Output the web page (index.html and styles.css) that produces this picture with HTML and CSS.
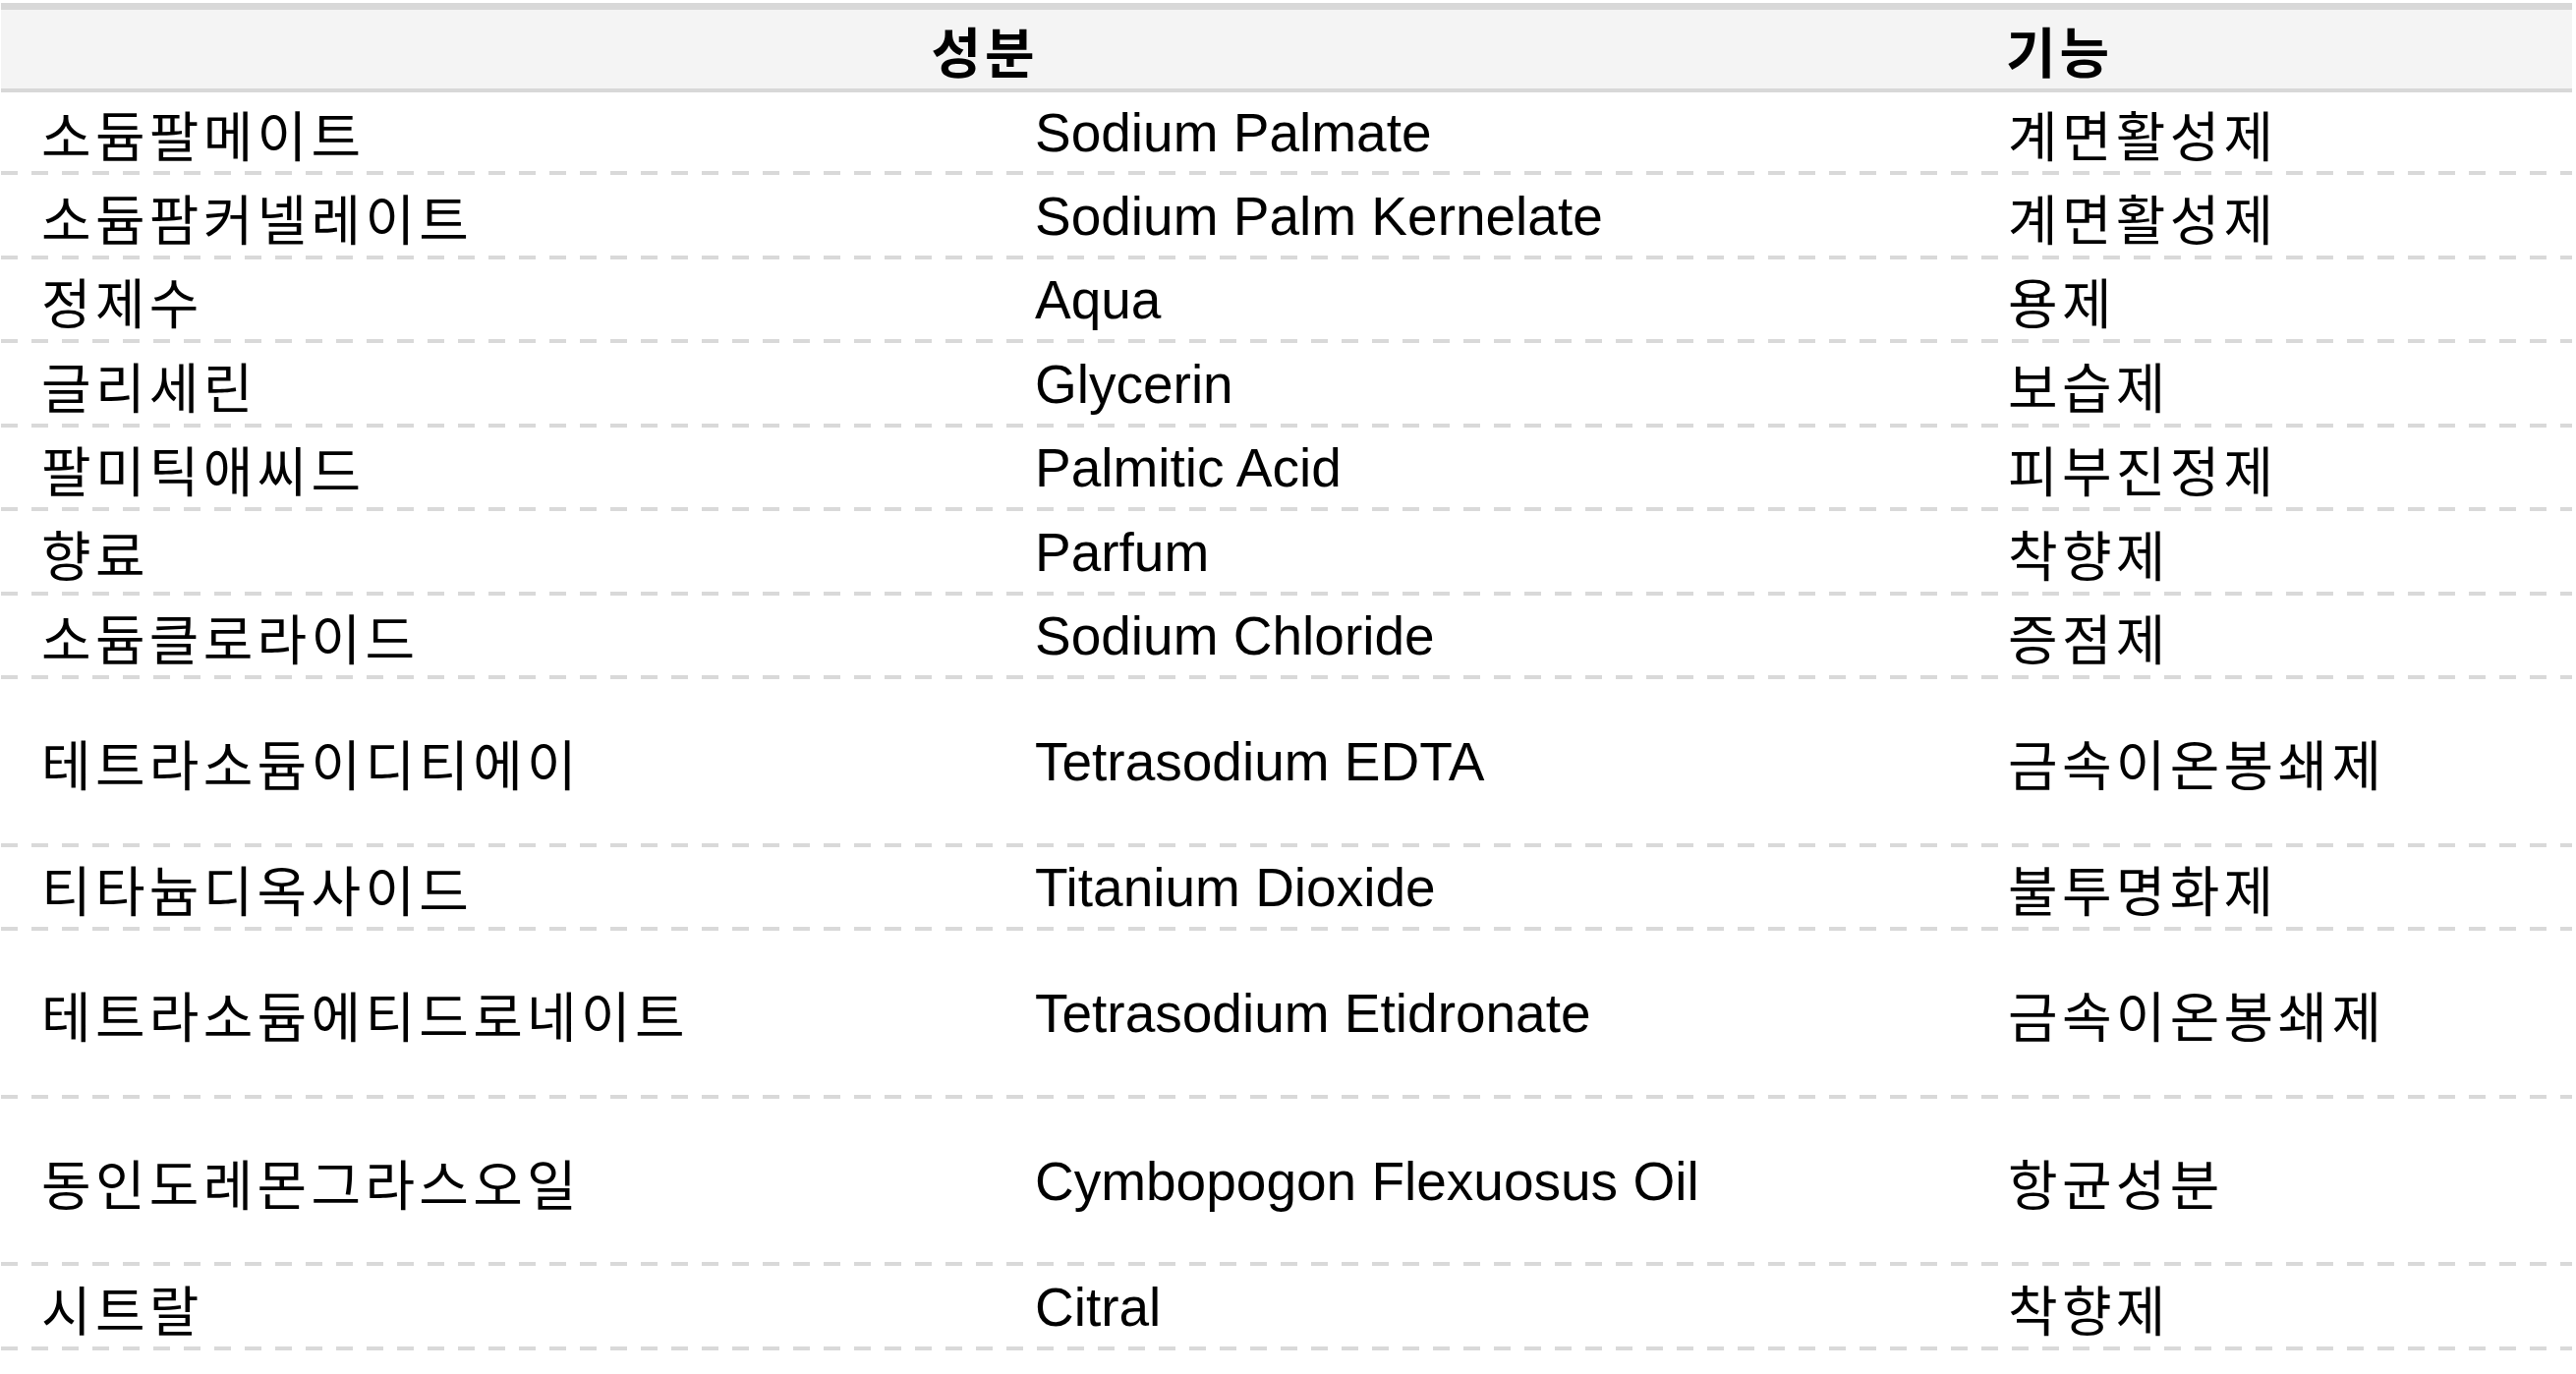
FILE: index.html
```html
<!DOCTYPE html>
<html lang="ko">
<head>
    <meta charset="UTF-8">
    <meta name="viewport" content="width=device-width, initial-scale=1.0">
    <title>전성분</title>
    <link rel="stylesheet" href="styles.css">
</head>
<body>
    <div class="container">
        <table class="ingredients">
            <colgroup>
                <col class="col-ko">
                <col class="col-en">
                <col class="col-func">
            </colgroup>
            <thead>
                <tr>
                    <th colspan="2" class="th-name">성분</th>
                    <th class="th-func">기능</th>
                </tr>
            </thead>
            <tbody>
                <tr><td>소듐팔메이트</td><td>Sodium Palmate</td><td>계면활성제</td></tr>
                <tr><td>소듐팜커넬레이트</td><td>Sodium Palm Kernelate</td><td>계면활성제</td></tr>
                <tr><td>정제수</td><td>Aqua</td><td>용제</td></tr>
                <tr><td>글리세린</td><td>Glycerin</td><td>보습제</td></tr>
                <tr><td>팔미틱애씨드</td><td>Palmitic Acid</td><td>피부진정제</td></tr>
                <tr><td>향료</td><td>Parfum</td><td>착향제</td></tr>
                <tr><td>소듐클로라이드</td><td>Sodium Chloride</td><td>증점제</td></tr>
                <tr class="tall"><td>테트라소듐이디티에이</td><td>Tetrasodium EDTA</td><td>금속이온봉쇄제</td></tr>
                <tr><td>티타늄디옥사이드</td><td>Titanium Dioxide</td><td>불투명화제</td></tr>
                <tr class="tall"><td>테트라소듐에티드로네이트</td><td>Tetrasodium Etidronate</td><td>금속이온봉쇄제</td></tr>
                <tr class="tall"><td>동인도레몬그라스오일</td><td>Cymbopogon Flexuosus Oil</td><td>항균성분</td></tr>
                <tr><td>시트랄</td><td>Citral</td><td>착향제</td></tr>
            </tbody>
        </table>
    </div>
</body>
</html>
```

FILE: styles.css
```css
* {
    box-sizing: border-box;
    margin: 0;
    padding: 0;
}

body {
    font-family: "Liberation Sans", Arial, "Noto Sans CJK KR", sans-serif;
    background-color: #fff;
    color: #000;
}

.container {
    padding: 3px 4px 0 1px;
}

.ingredients {
    width: 100%;
    border-collapse: collapse;
    table-layout: fixed;
    font-size: 55px;
}

.col-ko {
    width: 1008px;
}

.col-en {
    width: 990px;
}

.ingredients thead tr {
    background-color: #f4f4f4;
    border-top: 7px solid #d8d8d8;
    border-bottom: 4px solid #d8d8d8;
}

.ingredients th {
    height: 80px;
    font-weight: bold;
    vertical-align: middle;
    letter-spacing: 4px;
}

.th-name {
    text-align: center;
    padding-left: 4px;
}

.th-func {
    text-align: left;
    padding-left: 42px;
}

.ingredients td {
    height: 85.5px;
    padding: 1px 0 3px 44px;
    vertical-align: middle;
    white-space: nowrap;
}

/* korean columns are spaced a bit wider */
.ingredients td:first-child {
    padding-left: 41px;
    letter-spacing: 4.3px;
}

.ingredients td:last-child {
    letter-spacing: 4.3px;
}

.ingredients tbody tr {
    background-image: linear-gradient(to right, #d9d9d9 17px, transparent 17px);
    background-size: 31px 4px;
    background-repeat: repeat-x;
    background-position: left bottom;
}

.ingredients tr.tall td {
    height: 170.5px;
}
```
